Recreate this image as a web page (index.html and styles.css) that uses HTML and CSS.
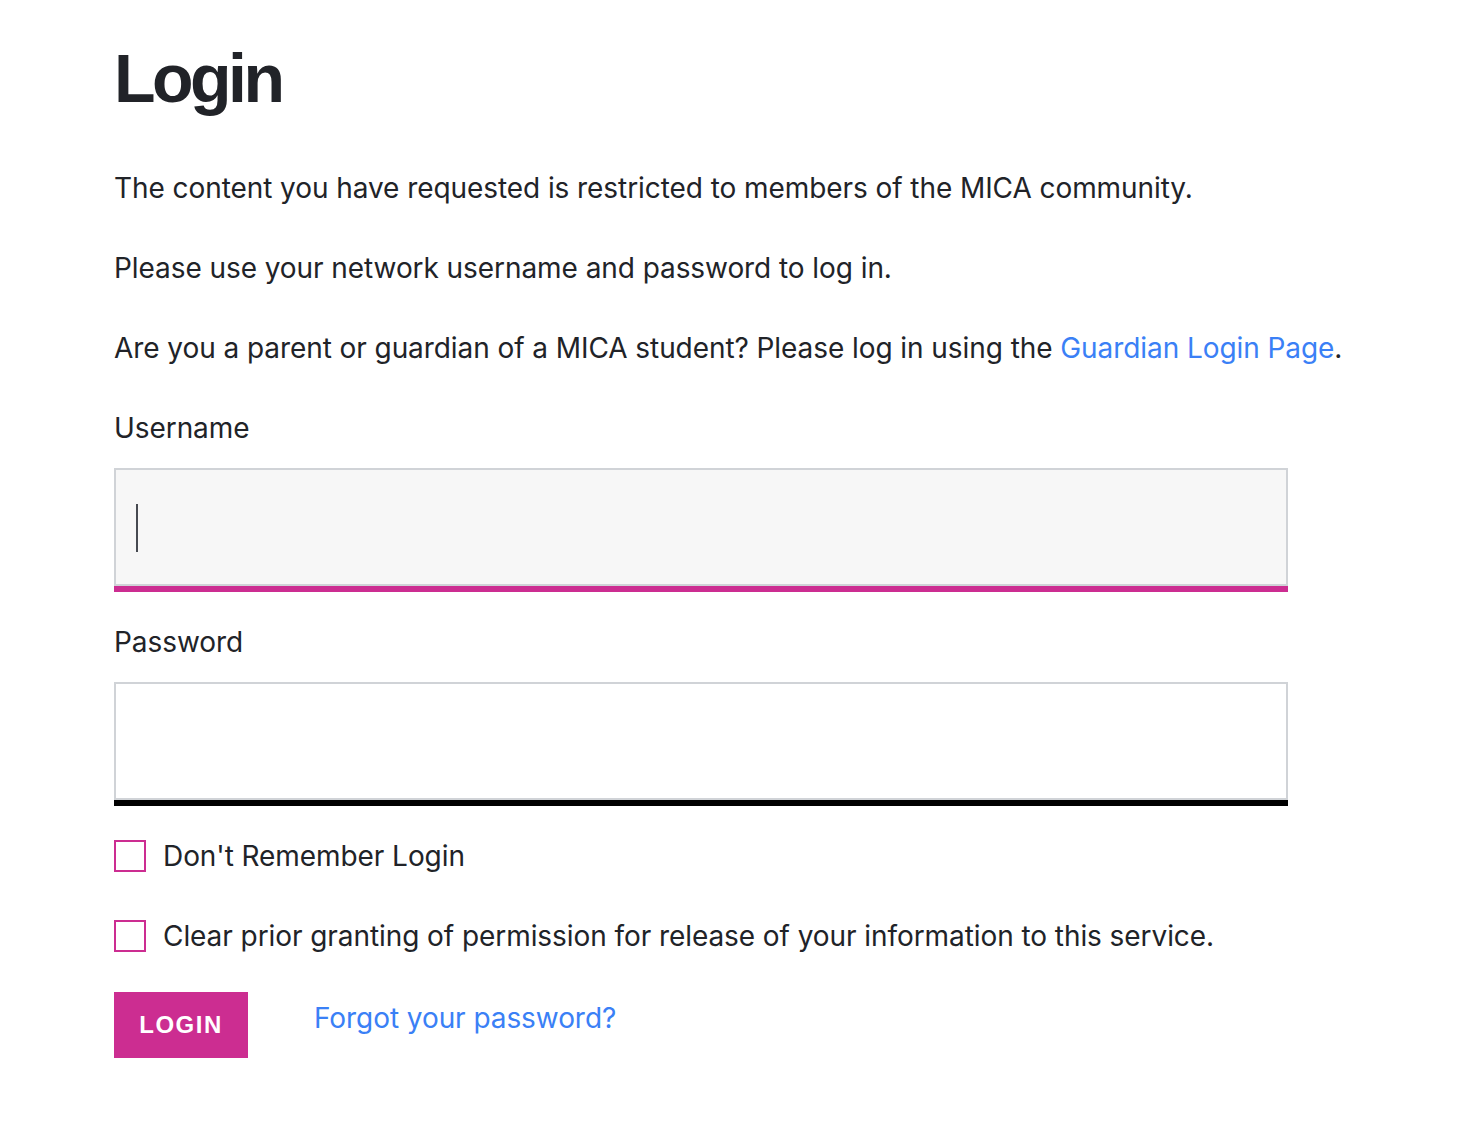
FILE: index.html
```html
<!DOCTYPE html>
<html lang="en">
<head>
<meta charset="utf-8">
<title>Login</title>
<link rel="stylesheet" href="styles.css">
</head>
<body>
<main class="page">
  <h1 class="title">Login</h1>
  <p class="text">The content you have requested is restricted to members of the MICA community.</p>
  <p class="text">Please use your network username and password to log in.</p>
  <p class="text">Are you a parent or guardian of a MICA student? Please log in using the <a class="link" href="#">Guardian Login Page</a>.</p>
  <form class="form">
    <label class="label" for="username">Username</label>
    <div class="field field-active">
      <input class="input input-active" id="username" type="text">
      <span class="caret"></span>
    </div>
    <label class="label label-pw" for="password">Password</label>
    <div class="field field-dark">
      <input class="input" id="password" type="password">
    </div>
    <div class="check-row">
      <span class="checkbox"></span>
      <span class="check-label">Don't Remember Login</span>
    </div>
    <div class="check-row check-row-2">
      <span class="checkbox"></span>
      <span class="check-label">Clear prior granting of permission for release of your information to this service.</span>
    </div>
    <div class="actions">
      <button class="button" type="button">LOGIN</button>
      <a class="link forgot" href="#">Forgot your password?</a>
    </div>
  </form>
</main>
</body>
</html>
```

FILE: styles.css
```css
html, body {
  margin: 0;
  padding: 0;
  background: #ffffff;
}

body {
  font-family: Inter, "Liberation Sans", Arial, sans-serif;
  color: #212328;
}

.page {
  padding: 38px 114px 0 114px;
}

.title {
  margin: 0;
  font-family: "Liberation Sans", Arial, sans-serif;
  font-size: 68px;
  line-height: 80px;
  font-weight: 700;
  letter-spacing: -3.5px;
  color: #212328;
}

.text {
  margin: 50px 0 0 0;
  font-size: 28px;
  line-height: 40px;
  letter-spacing: -0.07px;
}

.text + .text {
  margin-top: 40px;
}

.link {
  color: #3a80f6;
  text-decoration: none;
}

.form {
  display: flex;
  flex-direction: column;
  width: 1174px;
}

.label {
  display: block;
  margin-top: 40px;
  margin-bottom: 20px;
  font-size: 28px;
  line-height: 40px;
  letter-spacing: -0.07px;
}

.label-pw {
  margin-top: 30px;
}

.field {
  position: relative;
  border-bottom: 6px solid #cc2d91;
}

.field-dark {
  border-bottom-color: #000000;
}

.input {
  display: block;
  box-sizing: border-box;
  width: 100%;
  height: 118px;
  margin: 0;
  padding: 0 20px;
  border: 2px solid #d0d3d7;
  background: #ffffff;
  font-family: Inter, "Liberation Sans", Arial, sans-serif;
  font-size: 40px;
  outline: none;
}

.input-active {
  background: #f7f7f7;
}

.caret {
  position: absolute;
  left: 22px;
  top: 36px;
  width: 2px;
  height: 48px;
  background: #474a51;
}

.check-row {
  display: flex;
  align-items: center;
  gap: 17px;
  margin-top: 30px;
  height: 40px;
}

.check-row-2 {
  margin-top: 40px;
}

.checkbox {
  box-sizing: border-box;
  width: 32px;
  height: 32px;
  border: 2px solid #cc2d91;
  background: #ffffff;
  flex: none;
}

.check-label {
  font-size: 28px;
  line-height: 40px;
  letter-spacing: -0.07px;
}

.actions {
  display: flex;
  align-items: flex-start;
  gap: 66px;
  margin-top: 36px;
}

.button {
  width: 134px;
  height: 66px;
  margin: 0;
  padding: 0;
  border: none;
  background: #cc2d91;
  color: #ffffff;
  font-family: "Liberation Sans", Arial, sans-serif;
  font-size: 24px;
  font-weight: 700;
  letter-spacing: 1.5px;
  text-align: center;
}

.forgot {
  margin-top: 6px;
  font-size: 28px;
  line-height: 40px;
  letter-spacing: -0.07px;
}
```
